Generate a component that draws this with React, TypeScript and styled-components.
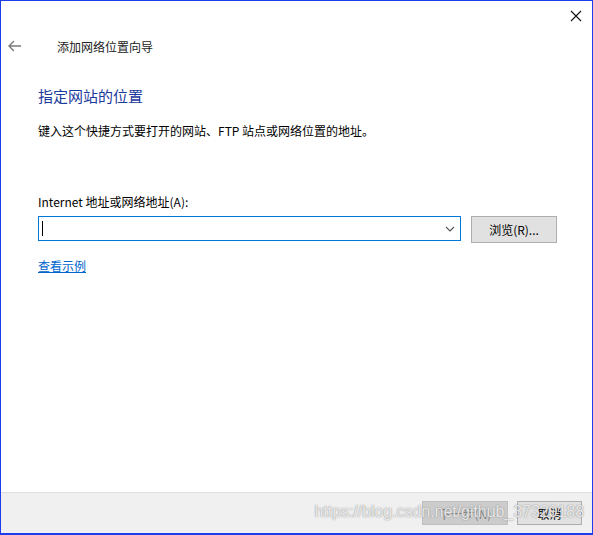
import React from 'react'
import styled, { createGlobalStyle } from 'styled-components'

const GlobalStyle = createGlobalStyle`
    html, body {
        margin: 0;
        padding: 0;
        background: #ffffff;
    }
    * {
        box-sizing: border-box;
    }
`

const uiFont = `"Segoe UI", "Noto Sans CJK SC", "Noto Sans", sans-serif`

const App: React.FC = () => {
    return (
        <>
            <GlobalStyle />
            <Window>
                <TitleBar>
                    <CloseButton aria-label="关闭">
                        <svg width="12" height="12" viewBox="0 0 12 12">
                            <path d="M1 1 L11 11 M11 1 L1 11" stroke="#111" strokeWidth="1.1" />
                        </svg>
                    </CloseButton>
                </TitleBar>
                <HeaderRow>
                    <BackButton aria-label="返回">
                        <svg width="14" height="12" viewBox="0 0 14 12">
                            <path d="M6 1 L1 6 L6 11 M1 6 L13 6" stroke="#7a7a7a" strokeWidth="1.4" fill="none" />
                        </svg>
                    </BackButton>
                    <WizardTitle>添加网络位置向导</WizardTitle>
                </HeaderRow>
                <Content>
                    <Heading>指定网站的位置</Heading>
                    <Description>键入这个快捷方式要打开的网站、FTP 站点或网络位置的地址。</Description>
                    <Label>Internet 地址或网络地址(A):</Label>
                    <InputRow>
                        <Combo>
                            <Caret />
                            <Chevron>
                                <svg width="10" height="6" viewBox="0 0 10 6">
                                    <path d="M1 1 L5 5 L9 1" stroke="#555" strokeWidth="1.1" fill="none" />
                                </svg>
                            </Chevron>
                        </Combo>
                        <Button>浏览(R)...</Button>
                    </InputRow>
                    <ExampleLink href="#">查看示例</ExampleLink>
                </Content>
                <Footer>
                    <Button disabled>下一步(N)</Button>
                    <Button $narrow>取消</Button>
                    <Watermark>https://blog.csdn.net/github_37320188</Watermark>
                </Footer>
            </Window>
        </>
    )
}

const Window = styled.div`
    position: relative;
    width: 593px;
    height: 535px;
    border: 1px solid #1c3cf0;
    border-bottom-width: 2px;
    display: flex;
    flex-direction: column;
    background: #ffffff;
    font-family: ${uiFont};
    font-size: 12px;
    color: #000;
`
const TitleBar = styled.div`
    height: 30px;
    display: flex;
    justify-content: flex-end;
    align-items: center;
`
const CloseButton = styled.div`
    width: 30px;
    height: 30px;
    display: flex;
    align-items: center;
    justify-content: center;
    margin-right: 1px;
`
const HeaderRow = styled.div`
    display: flex;
    align-items: center;
    height: 28px;
    margin-top: 1px;
`
const BackButton = styled.div`
    width: 28px;
    display: flex;
    justify-content: center;
`
const WizardTitle = styled.div`
    margin-left: 28px;
    font-size: 12px;
    color: #222;
`
const Content = styled.div`
    flex: 1;
    padding: 0 0 0 37px;
    display: flex;
    flex-direction: column;
`
const Heading = styled.div`
    margin-top: 26px;
    font-size: 15px;
    line-height: 20px;
    color: #1a3a9c;
`
const Description = styled.div`
    margin-top: 16px;
    line-height: 18px;
`
const Label = styled.div`
    margin-top: 54px;
    line-height: 16px;
`
const InputRow = styled.div`
    margin-top: 6px;
    display: flex;
    align-items: flex-start;
    gap: 10px;
`
const Combo = styled.div`
    width: 423px;
    height: 25px;
    border: 1px solid #0078d7;
    display: flex;
    align-items: center;
    justify-content: space-between;
    padding: 0 4px 0 3px;
`
const Caret = styled.div`
    width: 1px;
    height: 15px;
    background: #000;
`
const Chevron = styled.div`
    display: flex;
    align-items: center;
    margin-right: 1px;
`
const Button = styled.button<{ $narrow?: boolean }>`
    width: ${p => (p.$narrow ? '65px' : '86px')};
    height: 27px;
    background: #e1e1e1;
    border: 1px solid #adadad;
    font-family: ${uiFont};
    font-size: 12px;
    color: #000;
    padding: 0;
    &:disabled {
        background: #cccccc;
        border-color: #bfbfbf;
        color: #838383;
    }
`
const ExampleLink = styled.a`
    margin-top: 14px;
    align-self: flex-start;
    color: #0066cc;
    text-decoration: underline;
    line-height: 18px;
`
const Footer = styled.div`
    position: relative;
    height: 41px;
    border-top: 1px solid #dfdfdf;
    background: #f0f0f0;
    display: flex;
    justify-content: flex-end;
    align-items: center;
    gap: 9px;
    padding-right: 10px;
    & > button {
        height: 24px;
    }
`
const Watermark = styled.div`
    position: absolute;
    right: 8px;
    top: 10px;
    font-family: "Liberation Sans", Arial, sans-serif;
    font-size: 16px;
    letter-spacing: -0.05px;
    color: rgba(255, 255, 255, 0.8);
    text-shadow: 0 0 1px rgba(110, 110, 110, 0.7), 0 0 2px rgba(150, 150, 150, 0.5);
    pointer-events: none;
    white-space: nowrap;
`

export default App
